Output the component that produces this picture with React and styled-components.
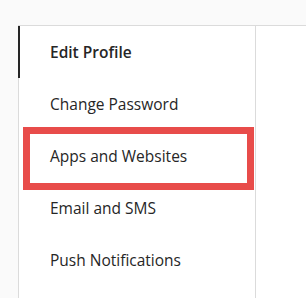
import React from "react";
import styled, { createGlobalStyle } from "styled-components";

const GlobalStyle = createGlobalStyle`
  html, body {
    margin: 0;
    padding: 0;
    background: #fafafa;
    overflow: hidden;
  }
  body {
    font-family: "Open Sans", "Noto Sans", sans-serif;
    color: #262626;
  }
`;

const Page = styled.div`
  width: 100vw;
  height: 100vh;
  padding: 25px 0 0 18px;
  box-sizing: border-box;
  overflow: hidden;
`;

const Card = styled.div`
  display: grid;
  grid-template-columns: 237px 1fr;
  width: calc(100% + 20px);
  height: calc(100% + 20px);
  background: #fff;
  border: 1px solid #dbdbdb;
`;

const Sidebar = styled.ul`
  list-style: none;
  margin: 0;
  padding: 0;
  border-right: 1px solid #dbdbdb;
`;

const NavItem = styled.li`
  position: relative;
  height: 52px;
  display: flex;
  align-items: center;
  padding-left: 30px;
  border-left: 2px solid ${(p) => (p.$active ? "#262626" : "transparent")};
  margin-left: -1px;
  font-size: 15.5px;
  font-weight: ${(p) => (p.$active ? 600 : 400)};
`;

const Highlight = styled.div`
  position: absolute;
  left: 3px;
  right: 1px;
  top: -3px;
  bottom: -8px;
  border: 7px solid #e84c4a;
  pointer-events: none;
`;

const items = [
  "Edit Profile",
  "Change Password",
  "Apps and Websites",
  "Email and SMS",
  "Push Notifications",
];

export default function App() {
  return (
    <>
      <GlobalStyle />
      <Page>
        <Card>
          <Sidebar>
            {items.map((label, i) => (
              <NavItem key={label} $active={i === 0}>
                {label}
                {i === 2 && <Highlight />}
              </NavItem>
            ))}
          </Sidebar>
          <div />
        </Card>
      </Page>
    </>
  );
}
